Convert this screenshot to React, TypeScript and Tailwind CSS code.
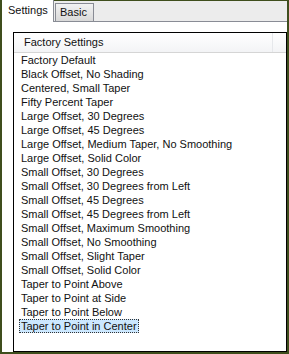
const presets = [
    "Factory Default",
    "Black Offset, No Shading",
    "Centered, Small Taper",
    "Fifty Percent Taper",
    "Large Offset, 30 Degrees",
    "Large Offset, 45 Degrees",
    "Large Offset, Medium Taper, No Smoothing",
    "Large Offset, Solid Color",
    "Small Offset, 30 Degrees",
    "Small Offset, 30 Degrees from Left",
    "Small Offset, 45 Degrees",
    "Small Offset, 45 Degrees from Left",
    "Small Offset, Maximum Smoothing",
    "Small Offset, No Smoothing",
    "Small Offset, Slight Taper",
    "Small Offset, Solid Color",
    "Taper to Point Above",
    "Taper to Point at Side",
    "Taper to Point Below",
    "Taper to Point in Center",
];

const selected = "Taper to Point in Center";

export default function App() {
    return (
        <div className="w-[289px] h-[354px] flex flex-col overflow-hidden bg-white border-l-2 border-r-2 border-b-2 border-[#3f4e1d] text-[11px] text-[#111] font-['Liberation_Sans',Arial,sans-serif]">
            {/* tab strip */}
            <div className="h-[22px] flex items-end shrink-0">
                <div className="h-[22px] w-[52px] flex items-center pl-[6px] pb-px bg-white border-r border-[#898c95]">
                    Settings
                </div>
                <div className="h-[22px] flex-1 flex flex-col border-t border-[#3f4e1d]">
                    <div className="flex-1 flex items-end bg-[#ececec] pl-px">
                        <div className="h-[18px] w-[39px] flex items-center pl-[4px] border-t border-l border-r border-[#898c95] bg-gradient-to-b from-[#f2f2f2] to-[#d9d9d9]">
                            Basic
                        </div>
                    </div>
                    <div className="h-px bg-[#898c95]" />
                </div>
            </div>

            {/* tab page */}
            <div className="flex-1 flex flex-col pl-[11px] pt-[10px]">
                <div className="flex-1 flex flex-col border border-black">
                    <div className="h-[20px] shrink-0 flex items-center bg-gradient-to-b from-white to-[#f3f4f6] border-b border-[#d5d5d5]">
                        <span className="pl-[10px] flex-1">Factory Settings</span>
                        <div className="w-px h-full bg-[#e6e8eb] mr-[13px]" />
                    </div>
                    <div className="flex flex-col pl-[5px]">
                        {presets.map((p) => (
                            <div key={p} className="h-[14px] flex items-center">
                                <span
                                    className={
                                        p === selected
                                            ? "h-[14px] flex items-center px-px bg-[#cce8ff] border border-dotted border-[#333]"
                                            : "px-[2px] leading-[14px]"
                                    }
                                >
                                    {p}
                                </span>
                            </div>
                        ))}
                    </div>
                </div>
            </div>
        </div>
    );
}
